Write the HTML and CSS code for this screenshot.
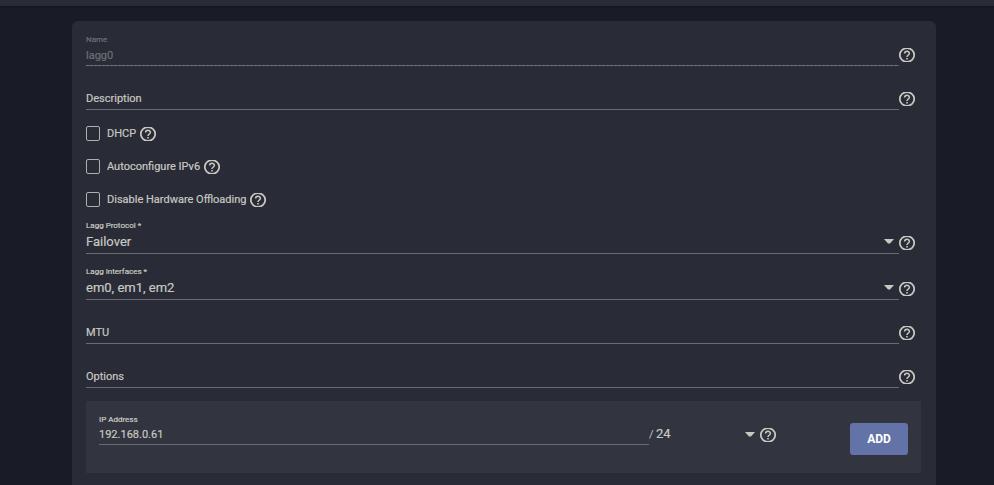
FILE: index.html
```html
<!DOCTYPE html>
<html lang="en">
<head>
<meta charset="utf-8">
<title>Edit Interface</title>
<link rel="stylesheet" href="styles.css">
</head>
<body>
<svg class="defs" aria-hidden="true">
  <symbol id="help" viewBox="0 0 16 14">
    <ellipse cx="8" cy="7" rx="7.200" ry="6.900" fill="none" stroke="currentColor" stroke-width="1.700"/>
    <path d="M5.600 5.600C5.600 2.600 10.400 2.600 10.400 5.400C10.400 7 8 7.100 8 9.100" fill="none" stroke="currentColor" stroke-width="1.500"/>
    <path d="M7.200 10h1.600v1.500H7.200z" fill="currentColor"/>
  </symbol>
  <symbol id="caret" viewBox="0 0 10 5"><path d="M0 0h10L6 4.500H4z"/></symbol>
</svg>
<header class="topbar"></header>
<main class="page">
  <form class="card">
    <div class="row">
      <div class="field disabled">
        <label class="caption" for="name">Name</label>
        <input id="name" type="text" value="lagg0" disabled>
      </div>
      <svg class="help"><use href="#help"/></svg>
    </div>
    <div class="row">
      <div class="field empty">
        <label for="description">Description</label>
        <input id="description" type="text">
      </div>
      <svg class="help"><use href="#help"/></svg>
    </div>
    <div class="checks">
      <div class="check">
        <input id="dhcp" type="checkbox"><label for="dhcp">DHCP</label>
        <svg class="help"><use href="#help"/></svg>
      </div>
      <div class="check">
        <input id="ipv6" type="checkbox"><label for="ipv6">Autoconfigure IPv6</label>
        <svg class="help"><use href="#help"/></svg>
      </div>
      <div class="check">
        <input id="offload" type="checkbox"><label for="offload">Disable Hardware Offloading</label>
        <svg class="help"><use href="#help"/></svg>
      </div>
    </div>
    <div class="row">
      <div class="field choice">
        <label class="caption" for="protocol">Lagg Protocol *</label>
        <select id="protocol"><option>Failover</option></select>
        <svg class="caret"><use href="#caret"/></svg>
      </div>
      <svg class="help"><use href="#help"/></svg>
    </div>
    <div class="row">
      <div class="field choice">
        <label class="caption" for="interfaces">Lagg Interfaces *</label>
        <select id="interfaces"><option>em0, em1, em2</option></select>
        <svg class="caret"><use href="#caret"/></svg>
      </div>
      <svg class="help"><use href="#help"/></svg>
    </div>
    <div class="row">
      <div class="field empty">
        <label for="mtu">MTU</label>
        <input id="mtu" type="text">
      </div>
      <svg class="help"><use href="#help"/></svg>
    </div>
    <div class="row">
      <div class="field empty">
        <label for="options">Options</label>
        <input id="options" type="text">
      </div>
      <svg class="help"><use href="#help"/></svg>
    </div>
    <section class="address">
      <div class="field ip">
        <label class="caption" for="ip">IP Address</label>
        <input id="ip" type="text" value="192.168.0.61">
      </div>
      <span class="slash">/</span>
      <div class="field mask">
        <select id="mask" aria-label="Netmask"><option>24</option></select>
        <svg class="caret"><use href="#caret"/></svg>
      </div>
      <svg class="help"><use href="#help"/></svg>
      <button class="add" type="button">ADD</button>
    </section>
  </form>
</main>
</body>
</html>
```
FILE: styles.css
```css
* {
  box-sizing: border-box;
}

body {
  margin: 0;
  background: #191b26;
  color: #c8c8c2;
  font: 11px/16px Roboto, sans-serif;
}

.defs {
  position: absolute;
  width: 0;
  height: 0;
}

.topbar {
  height: 6px;
  background: #292b36;
  box-shadow: 0 1px 2px #12141c;
}

.page {
  padding: 15px 58px 0 72px;
}

.card {
  display: flex;
  flex-direction: column;
  gap: 12px;
  padding: 13px 15px 12px 14px;
  border-radius: 6px 6px 0 0;
  background: #292b36;
}

.row {
  display: flex;
  align-items: flex-end;
  padding-right: 6px;
}

.field {
  position: relative;
  display: flex;
  flex: 1;
  flex-direction: column;
  justify-content: flex-end;
  height: 32px;
  border-bottom: 1px solid #6a6c73;
}

.choice {
  height: 34px;
}

.caption {
  font-size: 8px;
  line-height: 10px;
}

.field input,
.field select {
  width: 100%;
  height: 20px;
  padding: 0;
  border: 0;
  outline: 0;
  background: transparent;
  color: inherit;
  font: inherit;
  appearance: none;
}

.field select {
  height: 22px;
  font-size: 13px;
}

.disabled {
  border-bottom: 0;
  padding-bottom: 1px;
  background: repeating-linear-gradient(90deg, #74767c 0 3px, #4c4e57 3px 4px) bottom / 100% 1px no-repeat;
  color: #6e6f76;
}

.empty label {
  position: absolute;
  bottom: 2px;
  left: 0;
}

.field,
.check {
  -webkit-text-stroke: 0.2px;
}

.help {
  flex: none;
  width: 16px;
  height: 14px;
  margin-bottom: 4px;
  color: #c8c8c2;
}

.caret {
  position: absolute;
  right: 5px;
  bottom: 9px;
  width: 10px;
  height: 5px;
  fill: #c8c8c2;
}

.checks {
  margin: -5px 0 -8px;
}

.check {
  display: flex;
  align-items: center;
  height: 33px;
}

.check input {
  width: 14px;
  height: 15px;
  margin: 0 7px 0 0;
  border: 1px solid #b0afa9;
  border-radius: 2px;
  appearance: none;
}

.check .help {
  margin: 0 0 0 4px;
}

.address {
  display: flex;
  align-items: flex-end;
  height: 72px;
  margin-top: 1px;
  padding: 12px 13px 28px;
  background: #32343f;
}

.address .help {
  margin-bottom: 3px;
}

.ip {
  flex: 1;
}

.ip input {
  height: 19px;
}

.slash {
  width: 7px;
  margin-bottom: 2px;
}

.mask {
  flex: none;
  width: 104px;
  border-bottom: 0;
}

.mask .caret {
  bottom: 8px;
}

.add {
  width: 58px;
  height: 32px;
  margin: 0 0 -10px 74px;
  padding: 0;
  border: 0;
  border-radius: 3px;
  background: #6373a7;
  color: #fff;
  font: 700 12px/32px Roboto, sans-serif;
}
```
